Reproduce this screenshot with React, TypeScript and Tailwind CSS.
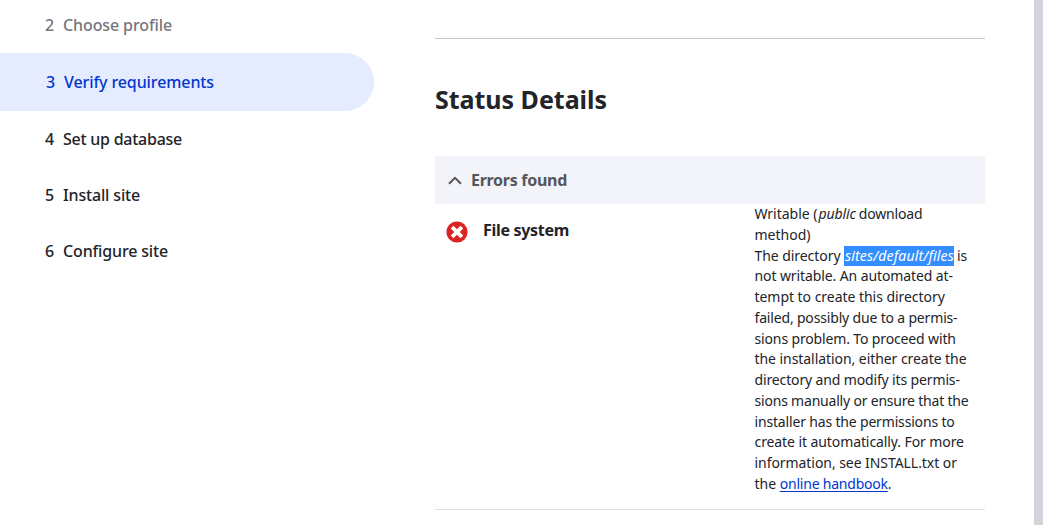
type Step = { number: number; label: string; state: "done" | "active" | "todo"; tracking: string };

const steps: Step[] = [
  { number: 2, label: "Choose profile", state: "done", tracking: "tracking-[-0.11px]" },
  { number: 3, label: "Verify requirements", state: "active", tracking: "tracking-[-0.1px]" },
  { number: 4, label: "Set up database", state: "todo", tracking: "tracking-[-0.25px]" },
  { number: 5, label: "Install site", state: "todo", tracking: "tracking-[-0.16px]" },
  { number: 6, label: "Configure site", state: "todo", tracking: "tracking-[-0.15px]" },
];

const stateStyles = {
  done: "h-14 pl-[45px] text-[#75767b]",
  active: "h-[58px] rounded-r-full bg-[#e6ecff] pl-[46px] text-[#0036d0]",
  todo: "h-14 pl-[45px] text-[#232429]",
};

const bodyLines = [
  { text: "not writable. An automated at-", tracking: "tracking-[-0.1px]" },
  { text: "tempt to create this directory", tracking: "tracking-[-0.04px]" },
  { text: "failed, possibly due to a permis-", tracking: "tracking-[-0.17px]" },
  { text: "sions problem. To proceed with", tracking: "tracking-[-0.14px]" },
  { text: "the installation, either create the", tracking: "tracking-[-0.06px]" },
  { text: "directory and modify its permis-", tracking: "tracking-[-0.14px]" },
  { text: "sions manually or ensure that the", tracking: "tracking-[-0.2px]" },
  { text: "installer has the permissions to", tracking: "tracking-[-0.17px]" },
  { text: "create it automatically. For more", tracking: "tracking-[-0.09px]" },
  { text: "information, see INSTALL.txt or", tracking: "tracking-[-0.06px]" },
];

function Steps() {
  return (
    <ol className="-mt-[3px] w-[374px] shrink-0 text-base font-medium">
      {steps.map((step) => (
        <li key={step.number} className={`flex items-center ${stateStyles[step.state]}`}>
          <span className="w-[18px]">{step.number}</span>
          <span className={step.tracking}>{step.label}</span>
        </li>
      ))}
    </ol>
  );
}

function ErrorIcon() {
  return (
    <svg viewBox="0 0 22 22" className="mt-[17px] ml-[11px] h-[22px] w-[22px] shrink-0">
      <circle cx="11" cy="11" r="10.6" fill="#dc2323" />
      <path d="M6.1 6.1l9.8 9.8M15.9 6.1l-9.8 9.8" stroke="#fff" strokeWidth="3.9" fill="none" />
    </svg>
  );
}

export default function App() {
  return (
    <div className="flex h-[525px] overflow-hidden bg-white font-['Noto_Sans','Open_Sans',sans-serif] text-[#232429]">
      <Steps />
      <main className="ml-[61px] w-[550px] shrink-0">
        <hr className="mt-[38px] border-t border-[#c5c6ca]" />
        <h2 className="mt-[41px] text-[25px] leading-[38px] font-bold tracking-[-0.02px]">Status Details</h2>
        <h3 className="mt-[38px] flex h-12 items-center bg-[#f3f4f9] pl-[13px] text-base font-bold tracking-[-0.28px] text-[#55565b]">
          <svg viewBox="0 0 14 9" className="mt-px mr-[9px] h-[9px] w-[14px]">
            <path d="M1 7.8L7 1.8l6 6" fill="none" stroke="#55565b" strokeWidth="2" />
          </svg>
          Errors found
        </h3>
        <div className="flex h-[306px] items-start border-b border-[#dedfe4]">
          <ErrorIcon />
          <h4 className="mt-[14px] ml-[15px] w-[271.5px] text-base font-bold tracking-[-0.3px]">File system</h4>
          <div className="text-[14px] leading-[20.77px] whitespace-nowrap">
            <p className="tracking-[-0.02px]">
              Writable (<em className="mr-[3px] ml-px tracking-[-0.1px]">public</em>
              <span className="tracking-[-0.18px]">download</span>
            </p>
            <p>method)</p>
            <p className="flex">
              <span className="w-[89.5px] tracking-[-0.06px]">The directory</span>
              <em className="w-[110px] bg-[#338fff] pl-px tracking-[0.16px] text-white">sites/default/files</em>
              <span className="ml-[3px]">is</span>
            </p>
            {bodyLines.map((line) => (
              <p key={line.text} className={line.tracking}>
                {line.text}
              </p>
            ))}
            <p>
              the{" "}
              <a href="#" className="tracking-[-0.22px] text-[#0036d0] underline underline-offset-2">
                online handbook
              </a>
              .
            </p>
          </div>
        </div>
      </main>
      <div className="ml-auto h-full w-[9px] shrink-0 bg-[#d4d4dc]" />
    </div>
  );
}
